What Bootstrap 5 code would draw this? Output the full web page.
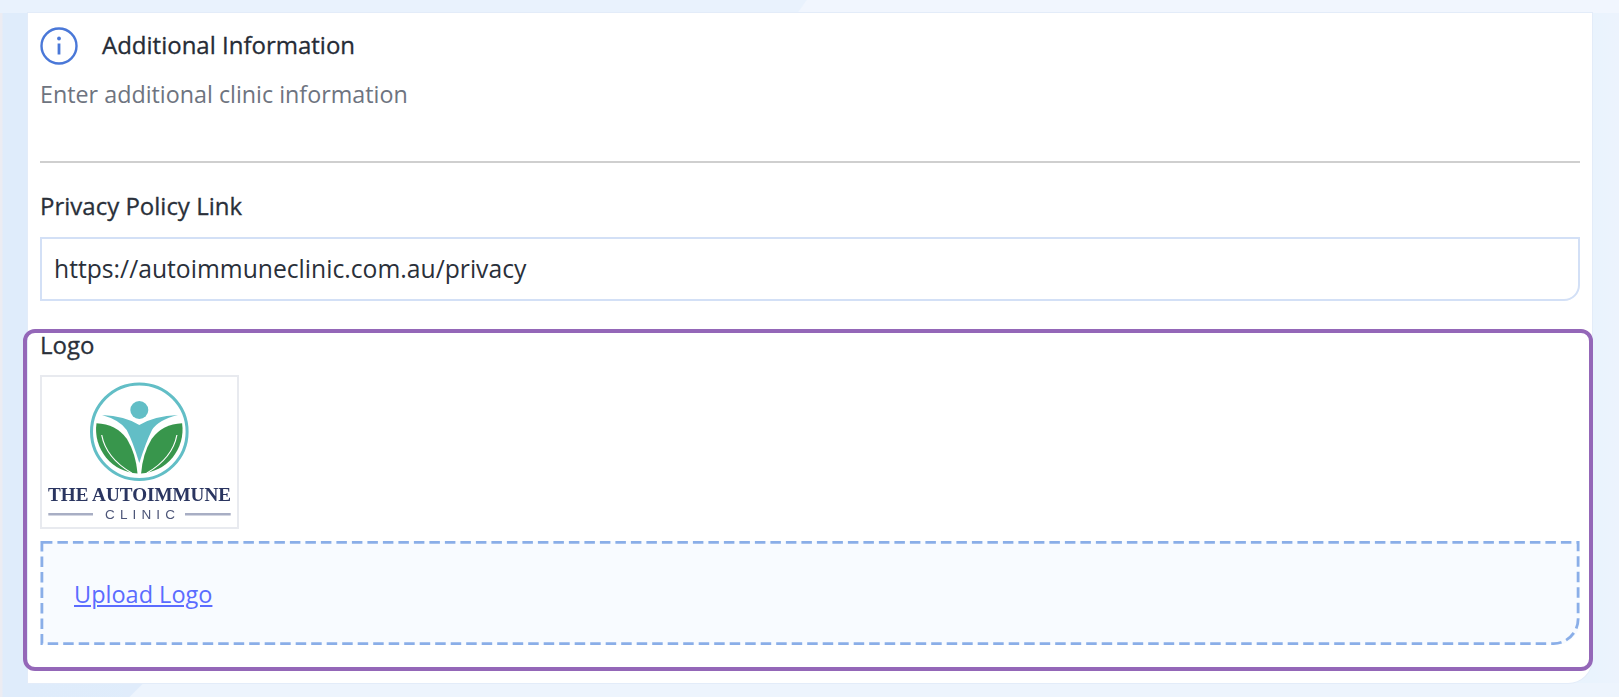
<!doctype html>
<html lang="en"><head><meta charset="utf-8"><title>Additional Information</title>
<link href="https://cdn.jsdelivr.net/npm/bootstrap@5.3.0/dist/css/bootstrap.min.css" rel="stylesheet">
<style>
html,body{height:697px;overflow:hidden}
body{font-family:"Open Sans",sans-serif;padding:13px 27px 14px 28px;color:#262c36;
background:
 linear-gradient(135deg,#e0ecfb 0 14px,#edf4fd 15px) 123px 683px/1496px 14px no-repeat,
 linear-gradient(125deg,#e9f2fd 0 49.5%,#f1f6fe 49.6% 100%) 0 0/100% 13px no-repeat,
 linear-gradient(90deg,#ececf2 0,#ececf2 2px,#dfecfb 3px,#dfecfb 28px,#e9f3fd 1592px,#ecf3fd 100%)}
.info-card{height:670px;background:#fff;border-bottom-right-radius:24px;padding:0 12px;box-shadow:0 0 0 1px #e3ecf9}
.head-row{height:62px;padding-top:3px}
.head-title{font-size:24px;line-height:32px;color:#262c36;margin-bottom:2px;-webkit-text-stroke:.3px #262c36}
.head-sub{font-size:23.3px;line-height:32px;color:#6e7480;margin:0}
.sub-box{height:86px;padding-top:3px}
.rule{height:2px;background:#cfcfcf;margin:0 0 27px}
.fld-label{font-size:24px;line-height:32px;color:#2a303a;margin:0 0 15px;display:block;-webkit-text-stroke:.3px #2a303a}
.url-input.form-control{height:64px;border:2px solid #d3e0f6;border-radius:0 0 16px 0;font-size:24.7px;color:#2a303a;padding:0 12px 2px;font-family:"Open Sans",sans-serif}
.logo-zone{margin:28px -13px 0 -17px;height:342px;border:4px solid #9467b8;border-radius:12px;padding:0 9px 0 13px}
.logo-zone .fld-label{margin:0 0 18px;line-height:24px}
.logo-frame{width:199px;height:154px;border:2px solid #e8eaef;display:block;margin-bottom:12px;filter:blur(.6px)}
.logo-frame svg{display:block;margin:-2px}
.drop-box{height:104px;background:#f8fbff;border-radius:0 0 24px 0;padding:4px 0 0 34px}
.dash-line{position:absolute;inset:0;width:100%;height:100%;pointer-events:none}
.drop-box a{font-size:23.500px;color:#5b6cff}
</style></head><body>
<div class="info-card">
 <div class="head-row d-flex align-items-center gap-4">
  <svg width="38" height="38" viewBox="0 0 38 38" fill="none" aria-hidden="true"><circle cx="19" cy="19" r="17.500" stroke="#4a78d8" stroke-width="2.400"/><circle cx="19" cy="11.500" r="1.900" fill="#4a78d8"/><path d="M19 16.500v11" stroke="#4a78d8" stroke-width="2.800"/></svg>
  <span class="head-title">Additional Information</span>
 </div>
 <div class="sub-box"><p class="head-sub">Enter additional clinic information</p></div>
 <div class="rule"></div>
 <label class="fld-label" for="pp">Privacy Policy Link</label>
 <input id="pp" class="form-control url-input" value="https://autoimmuneclinic.com.au/privacy">
 <div class="logo-zone">
  <span class="fld-label">Logo</span>
  <div class="logo-frame">
   <svg width="199" height="154" viewBox="0 0 199 154" role="img" aria-label="The Autoimmune Clinic logo">
    <g transform="translate(0 1)">
    <circle cx="99.300" cy="55.700" r="47.800" fill="#fff" stroke="#62bec6" stroke-width="3"/>
    <circle cx="99.300" cy="34" r="9" fill="#62bec6"/>
    <path d="M62 39Q85 40 99.300 49Q114 40 138 39Q118 44 112 54Q106 66 99.300 87Q93 66 86.700 54Q80 44 62 39Z" fill="#62bec6"/>
    <path d="M56.500 47.300Q76 48 87 63Q96 78 97.500 97.500A44 44 0 0 1 56.500 47.300Z" fill="#38964c"/>
    <path d="M142.100 47.300Q122.600 48 111.600 63Q102.600 78 101.100 97.500A44 44 0 0 0 142.100 47.300Z" fill="#38964c"/>
    <path d="M61.700 59Q66 82 91.700 97" stroke="#fff" stroke-width="1.200" fill="none"/><path d="M136.900 59Q132.600 82 106.900 97" stroke="#fff" stroke-width="1.200" fill="none"/>
    </g>
    <text x="8" y="126" font-family="Liberation Serif,serif" font-weight="700" font-size="19" fill="#2a3560" textLength="183" lengthAdjust="spacingAndGlyphs">THE AUTOIMMUNE</text>
    <path d="M8.300 139.300H53M145 139.300H190.700" stroke="#a8aec4" stroke-width="2.500"/>
    <text x="65" y="144" font-family="Liberation Sans,sans-serif" font-size="13.500" fill="#4c5578" textLength="70">CLINIC</text>
   </svg>
  </div>
  <div class="drop-box d-flex align-items-center position-relative"><a href="#">Upload Logo</a>
   <svg class="dash-line" viewBox="0 0 1539 104" fill="none" aria-hidden="true"><path d="M1.400 1.400H1537.600V78A24.600 24.600 0 0 1 1513 102.600H1.400Z" stroke="#8aaee8" stroke-width="2.800" stroke-dasharray="10.500 5"/></svg>
  </div>
 </div>
</div>
<script src="https://cdn.jsdelivr.net/npm/bootstrap@5.3.0/dist/js/bootstrap.bundle.min.js"></script>
</body></html>
